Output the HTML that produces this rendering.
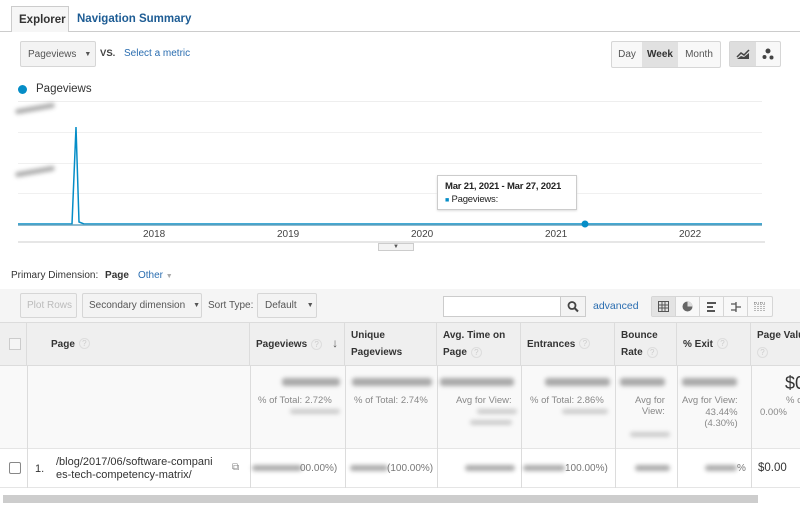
<!DOCTYPE html>
<html><head><meta charset="utf-8"><style>
*{box-sizing:border-box;margin:0;padding:0}
body{width:800px;height:506px;overflow:hidden;background:#fff;font-family:"Liberation Sans",Arial,sans-serif;position:relative;color:#222}
.a{position:absolute}
.btn{position:absolute;border:1px solid #d6d6d6;background:#f3f3f3;border-radius:2px;font-size:10px;color:#555;display:flex;align-items:center}
.blur{position:absolute;background:#888;filter:blur(2px);border-radius:3px;opacity:.7}
.th{position:absolute;top:322px;height:44px;border-right:1px solid #dcdcdc;font-size:10px;font-weight:bold;color:#333;line-height:17px;display:flex;flex-direction:column;justify-content:center;padding-left:6px;white-space:nowrap;overflow:hidden}
.q{display:inline-block;width:11px;height:11px;border-radius:50%;border:1px solid #ddd;color:#ccc;font-size:8px;text-align:center;line-height:10px;font-weight:normal;margin-left:4px;vertical-align:middle}
.vl{position:absolute;top:366px;height:122px;width:1px;background:#dcdcdc}
.sm{position:absolute;font-size:9.5px;color:#888;text-align:right;white-space:nowrap}
</style></head><body>
<div class="a" style="left:0;top:31px;width:800px;height:1px;background:#ccc"></div>
<div class="a" style="left:11px;top:6px;width:58px;height:26px;background:#f6f6f6;border:1px solid #ccc;border-bottom:none;font-size:11.5px;font-weight:bold;color:#333;padding:7px 0 0 7px">Explorer</div>
<div class="a" style="left:77px;top:13px;font-size:11.5px;font-weight:bold;color:#1d5c94">Navigation Summary</div>
<div class="btn" style="left:20px;top:41px;width:76px;height:26px;padding-left:7px">Pageviews <span style="margin-left:8px;font-size:7px">▼</span></div>
<div class="a" style="left:100px;top:48px;font-size:9.5px;font-weight:bold;color:#444">VS.</div>
<div class="a" style="left:124px;top:48px;font-size:10px;color:#2a6db0">Select a metric</div>
<div class="btn" style="left:611px;top:41px;width:110px;height:27px;background:#f8f8f8;padding:0">
<span style="width:30px;text-align:center">Day</span><span style="width:36px;height:25px;line-height:25px;text-align:center;background:#e1e1e1;font-weight:bold;color:#333">Week</span><span style="flex:1;text-align:center">Month</span></div>
<div class="btn" style="left:729px;top:41px;width:52px;height:26px;padding:0;background:#f8f8f8">
<span style="width:26px;height:24px;background:#dedede;display:flex;align-items:center;justify-content:center"><svg width="14" height="12"><path d="M1 9 L5 5 L8 7 L13 2" stroke="#444" stroke-width="1.5" fill="none"/><path d="M1 11 L5 8 L8 9 L13 5 L13 11Z" fill="#444"/></svg></span>
<span style="flex:1;display:flex;justify-content:center"><svg width="12" height="12"><circle cx="6" cy="3" r="2.5" fill="#444"/><circle cx="2.5" cy="9" r="2" fill="#444"/><circle cx="9.5" cy="9.5" r="2" fill="#444"/></svg></span></div>
<div class="a" style="left:18px;top:85px;width:9px;height:9px;border-radius:50%;background:#058dc7"></div>
<div class="a" style="left:36px;top:83px;font-size:11.5px;color:#333">Pageviews</div>
<div class="a" style="left:18px;top:101px;width:744px;height:1px;background:#eee"></div>
<div class="a" style="left:18px;top:132px;width:744px;height:1px;background:#f0f0f0"></div>
<div class="a" style="left:18px;top:163px;width:744px;height:1px;background:#f0f0f0"></div>
<div class="a" style="left:18px;top:193px;width:744px;height:1px;background:#f0f0f0"></div>
<div class="blur" style="left:15px;top:106px;width:40px;height:5px;transform:rotate(-10deg)"></div>
<div class="blur" style="left:15px;top:169px;width:40px;height:5px;transform:rotate(-10deg)"></div>
<svg class="a" style="left:0;top:0" width="800" height="260"><path d="M18 224 L72 224 L76 127 L79 222 L84 224 L762 224" stroke="#058dc7" stroke-width="1.5" fill="none"/><line x1="18" y1="225" x2="762" y2="225" stroke="#6aa6c0" stroke-width="1.5"/><circle cx="585" cy="224" r="3.5" fill="#058dc7"/><line x1="18" y1="242" x2="765" y2="242" stroke="#ccc"/></svg>
<div class="a" style="left:378px;top:243px;width:36px;height:8px;border:1px solid #ccc;background:#f3f3f3;font-size:6px;text-align:center;color:#555;line-height:6px">▼</div>
<div class="a" style="top:229px;left:143px;font-size:10px;color:#444">2018</div>
<div class="a" style="top:229px;left:277px;font-size:10px;color:#444">2019</div>
<div class="a" style="top:229px;left:411px;font-size:10px;color:#444">2020</div>
<div class="a" style="top:229px;left:545px;font-size:10px;color:#444">2021</div>
<div class="a" style="top:229px;left:679px;font-size:10px;color:#444">2022</div>
<div class="a" style="left:437px;top:175px;width:140px;height:35px;border:1px solid #ccc;background:#fff;box-shadow:0 1px 2px #ddd;font-size:9.5px;padding:4px 7px;color:#222;white-space:nowrap;line-height:13px;letter-spacing:-0.2px"><b>Mar 21, 2021 - Mar 27, 2021</b><br><span style="color:#058dc7;font-size:7px">■</span> Pageviews:</div>
<div class="a" style="left:11px;top:270px;font-size:10px;color:#333">Primary Dimension: <b style="margin-left:4px">Page</b></div>
<div class="a" style="left:138px;top:270px;font-size:10px;color:#2a6db0">Other <span style="color:#aaa;font-size:7px">▼</span></div>
<div class="a" style="left:0;top:289px;width:800px;height:33px;background:#f5f5f5"></div>
<div class="btn" style="left:20px;top:293px;width:57px;height:25px;color:#bbb;padding-left:6px">Plot Rows</div>
<div class="btn" style="left:82px;top:293px;width:120px;height:25px;padding-left:6px">Secondary dimension <span style="margin-left:8px;font-size:7px">▼</span></div>
<div class="a" style="left:208px;top:300px;font-size:10px;color:#555">Sort Type:</div>
<div class="btn" style="left:257px;top:293px;width:60px;height:25px;padding-left:7px">Default <span style="margin-left:10px;font-size:7px">▼</span></div>
<div class="a" style="left:443px;top:296px;width:143px;height:21px;border:1px solid #ccc;background:#fff"></div>
<div class="a" style="left:560px;top:296px;width:26px;height:21px;border:1px solid #ccc;background:#f3f3f3"><svg width="24" height="19"><circle cx="11" cy="8.5" r="3.5" stroke="#444" stroke-width="1.8" fill="none"/><line x1="13.5" y1="11" x2="17" y2="14.5" stroke="#444" stroke-width="2"/></svg></div>
<div class="a" style="left:593px;top:300px;font-size:10.5px;color:#2a6db0">advanced</div>
<div class="btn" style="left:651px;top:296px;width:122px;height:21px;padding:0;background:#f8f8f8">
<span style="width:24px;height:19px;background:#e3e3e3;border-right:1px solid #d6d6d6;display:flex;align-items:center;justify-content:center"><svg width="11" height="11"><path d="M.5 .5h10v10h-10zM4 .5v10M7 .5v10M.5 4h10M.5 7h10" stroke="#555" fill="none"/></svg></span>
<span style="width:24px;height:19px;border-right:1px solid #d6d6d6;display:flex;align-items:center;justify-content:center"><svg width="11" height="11"><circle cx="5.5" cy="5.5" r="5" fill="#666"/><path d="M5.5 5.5V0.5A5 5 0 0 1 10.5 5.5Z" fill="#ddd"/></svg></span>
<span style="width:24px;height:19px;border-right:1px solid #d6d6d6;display:flex;align-items:center;justify-content:center"><svg width="10" height="10"><path d="M0 1h9M0 5h6M0 9h8" stroke="#555" stroke-width="2"/></svg></span>
<span style="width:24px;height:19px;border-right:1px solid #d6d6d6;display:flex;align-items:center;justify-content:center"><svg width="10" height="10"><path d="M0 2h5M5 5h5M0 8h5M5 0v10" stroke="#555" stroke-width="1.3"/></svg></span>
<span style="flex:1;display:flex;justify-content:center"><svg width="12" height="10"><path d="M1 0v10M4 2v8M7 0v10M10 2v8M0 1h12" stroke="#777" stroke-dasharray="1 1"/></svg></span></div>
<div class="a" style="left:0;top:322px;width:800px;height:44px;background:#efefef;border-top:1px solid #dcdcdc;border-bottom:1px solid #dcdcdc"></div>
<div class="th" style="left:0;width:27px"><span style="display:block;width:12px;height:12px;border:1px solid #ccc;background:#f5f5f5;margin-left:3px"></span></div>
<div class="th" style="left:27px;width:223px;padding-left:24px"><div>Page<span class="q">?</span></div></div>
<div class="th" style="left:250px;width:95px"><div>Pageviews<span class="q">?</span><span style="margin-left:10px;font-size:12px;color:#555">↓</span></div></div>
<div class="th" style="left:345px;width:92px"><div>Unique</div><div>Pageviews</div></div>
<div class="th" style="left:437px;width:84px"><div>Avg. Time on</div><div>Page<span class="q">?</span></div></div>
<div class="th" style="left:521px;width:94px"><div>Entrances<span class="q">?</span></div></div>
<div class="th" style="left:615px;width:62px"><div>Bounce</div><div>Rate<span class="q">?</span></div></div>
<div class="th" style="left:677px;width:74px"><div>% Exit<span class="q">?</span></div></div>
<div class="th" style="left:751px;width:60px"><div>Page Valu</div><div><span class="q" style="margin-left:0">?</span></div></div>
<div class="a" style="left:0;top:366px;width:800px;height:83px;background:#f9f9f9;border-bottom:1px solid #e5e5e5"></div>
<div class="a" style="left:0;top:449px;width:800px;height:39px;border-bottom:1px solid #e5e5e5"></div>
<div class="vl" style="left:27px"></div><div class="vl" style="left:250px"></div><div class="vl" style="left:345px"></div><div class="vl" style="left:437px"></div><div class="vl" style="left:521px"></div><div class="vl" style="left:615px"></div><div class="vl" style="left:677px"></div><div class="vl" style="left:751px"></div>
<div class="blur" style="left:282px;top:378px;width:58px;height:8px"></div>
<div class="sm" style="left:258px;top:395px">% of Total: 2.72%</div>
<div class="blur" style="left:290px;top:409px;width:50px;height:5px;opacity:.4"></div>
<div class="blur" style="left:352px;top:378px;width:80px;height:8px"></div>
<div class="sm" style="left:354px;top:395px">% of Total: 2.74%</div>
<div class="blur" style="left:440px;top:378px;width:74px;height:8px"></div>
<div class="sm" style="left:456px;top:395px">Avg for View:</div>
<div class="blur" style="left:477px;top:409px;width:40px;height:5px;opacity:.4"></div>
<div class="blur" style="left:470px;top:420px;width:42px;height:5px;opacity:.4"></div>
<div class="blur" style="left:545px;top:378px;width:65px;height:8px"></div>
<div class="sm" style="left:530px;top:395px">% of Total: 2.86%</div>
<div class="blur" style="left:562px;top:409px;width:46px;height:5px;opacity:.4"></div>
<div class="blur" style="left:620px;top:378px;width:45px;height:8px"></div>
<div class="sm" style="left:635px;top:395px">Avg for<br>View:</div>
<div class="blur" style="left:630px;top:432px;width:40px;height:5px;opacity:.4"></div>
<div class="blur" style="left:682px;top:378px;width:55px;height:8px"></div>
<div class="sm" style="left:682px;top:395px;line-height:11.5px">Avg for View:<br>43.44%<br>(4.30%)</div>
<div class="a" style="left:785px;top:373px;font-size:18px;color:#333">$0</div>
<div class="sm" style="left:760px;top:395px;text-align:left;line-height:11.5px"><span style="margin-left:26px">% o</span><br>0.00%</div>
<div class="a" style="left:9px;top:462px;width:12px;height:12px;border:1px solid #888;border-radius:2px;background:#fff"></div>
<div class="a" style="left:35px;top:463px;font-size:11px;color:#333">1.</div>
<div class="a" style="left:56px;top:456px;font-size:11px;color:#333;line-height:13px">/blog/2017/06/software-compani<br>es-tech-competency-matrix/</div>
<div class="a" style="left:232px;top:462px;font-size:10px;color:#888">⧉</div>
<div class="blur" style="left:252px;top:465px;width:50px;height:6px"></div>
<div class="a" style="left:300px;top:463px;font-size:10px;color:#777">00.00%)</div>
<div class="blur" style="left:350px;top:465px;width:38px;height:6px"></div>
<div class="a" style="left:387px;top:463px;font-size:10px;color:#777">(100.00%)</div>
<div class="blur" style="left:465px;top:465px;width:50px;height:6px"></div>
<div class="blur" style="left:523px;top:465px;width:42px;height:6px"></div>
<div class="a" style="left:565px;top:463px;font-size:10px;color:#777">100.00%)</div>
<div class="blur" style="left:635px;top:465px;width:35px;height:6px"></div>
<div class="blur" style="left:705px;top:465px;width:32px;height:6px"></div>
<div class="a" style="left:737px;top:463px;font-size:10px;color:#777">%</div>
<div class="a" style="left:758px;top:462px;font-size:11.5px;color:#333">$0.00</div>
<div class="a" style="left:3px;top:495px;width:755px;height:8px;background:#cdcdcd"></div>
</body></html>
